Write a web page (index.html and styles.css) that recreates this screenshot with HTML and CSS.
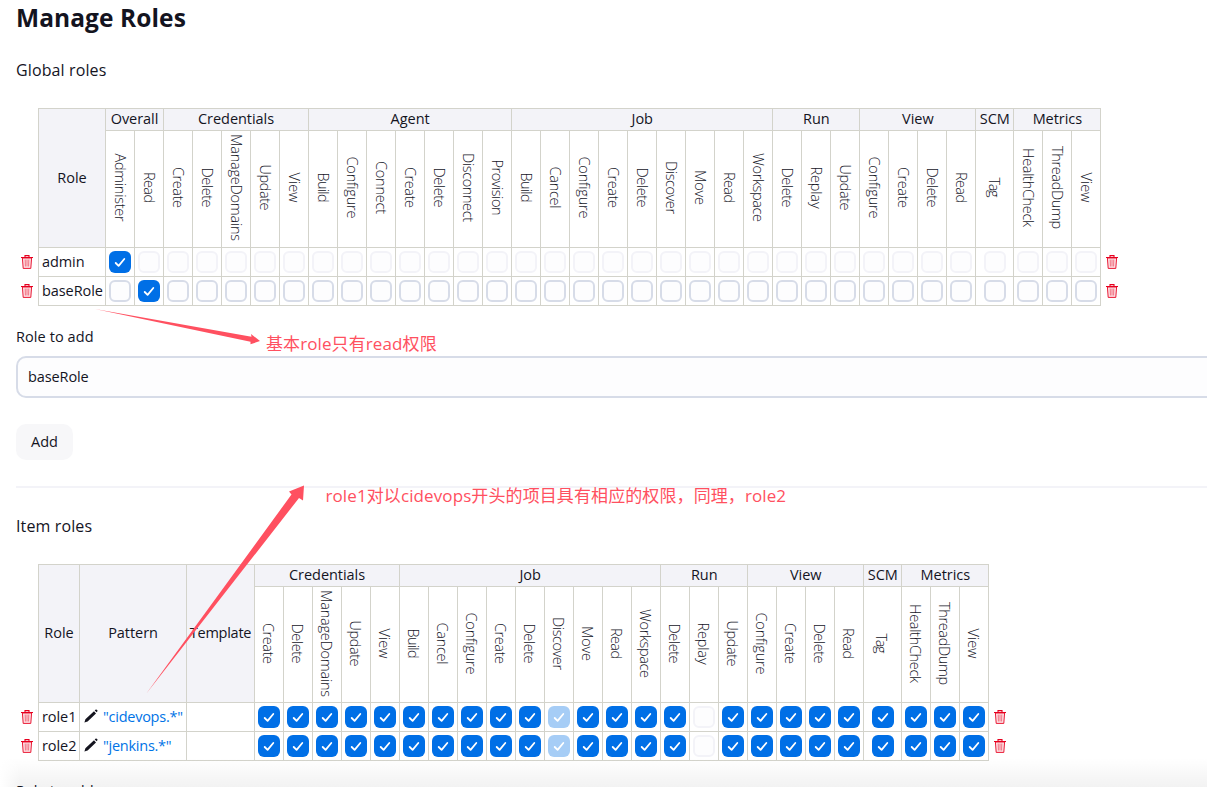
FILE: index.html
```
<!DOCTYPE html>
<html lang="en">
<head>
<meta charset="utf-8">
<title>Manage Roles</title>
<link rel="stylesheet" href="styles.css">
</head>
<body>
<svg class="sprite" aria-hidden="true">
  <symbol id="trash" viewBox="0 0 12 14">
    <path d="M0 2.500h12M4 2V.6h4V2" fill="none" stroke="#e6001f" stroke-width="1.1"/>
    <path d="M1.400 3l.8 10.400h7.600L10.600 3z" fill="#fde0e4" stroke="#e6001f" stroke-width=".9"/>
    <path d="M4.200 4.500l.2 7M6 4.500v7M7.800 4.500l-.2 7" fill="none" stroke="#ee5568" stroke-width=".8"/>
  </symbol>
  <symbol id="pencil" viewBox="0 0 14 14">
    <path d="M.4 13.500l1-3.300L10 2.200l2 2.200L3.600 12.500zM10.700 1.600l1.100-1c.7-.6 2.300 1 1.600 1.700l-.8.900z" fill="#14141f"/>
  </symbol>
</svg>
<main class="page">
  <h1 class="title">Manage Roles</h1>
  <h2 class="section-title">Global roles</h2>
  <table class="matrix" id="global-roles"></table>
  <label class="label" for="role">Role to add</label>
  <input class="input" id="role" value="baseRole">
  <button class="button" type="button">Add</button>
  <hr class="rule">
  <h2 class="section-title section-title--item">Item roles</h2>
  <table class="matrix matrix--item" id="item-roles"></table>
  <label class="label label--last">Role to add</label>
</main>
<div class="bottom-bar"></div>
<div class="page-end"></div>
<svg class="arrows" viewBox="0 0 1207 792" aria-hidden="true">
  <path d="M95 309L251.500 336.700L251 334L260 341L250.500 344.300L250.500 341.800z"/>
  <path d="M146 694L291.500 494.500L289 491.500L304 485.500L303 500.500L299 498z"/>
</svg>
<p class="note note--base">基本role只有read权限</p>
<p class="note note--item">role1对以cidevops开头的项目具有相应的权限，同理，role2</p>
<script src="matrix.js"></script>
</body>
</html>
```
FILE: styles.css
```
* { box-sizing: border-box; }
body { margin: 0; background: #fff; color: #14141f; font-family: "Open Sans", "Noto Sans", sans-serif; font-size: 14.5px; height: 792px; overflow: hidden; position: relative; }
.sprite { position: absolute; width: 0; height: 0; }
.page { padding-left: 16px; width: 1240px; }
.title { margin: 0; height: 36px; line-height: 36px; font-size: 24.5px; font-weight: 700; letter-spacing: .08px; }
.section-title { margin: 22px 0 26px; height: 24px; line-height: 24px; font-size: 16px; font-weight: 400; letter-spacing: .12px; }
.section-title--item { margin: 26px 0; }
.matrix { border-collapse: separate; border-spacing: 0; table-layout: fixed; width: 1106px; }
.matrix--item { width: 994px; }
.w-icon { width: 22px; }
.w-perm { width: 29px; }
.w-scm { width: 38px; }
.w-role { width: 67px; }
.w-item-role { width: 41px; }
.w-pattern { width: 107px; }
.w-template { width: 68px; }
.matrix th, .matrix td { padding: 0; border: 0 solid #d3d3cb; border-width: 1px 0 0 1px; font-weight: 400; white-space: nowrap; line-height: 19px; }
.matrix th { padding-bottom: 2px; background: #f3f3f8; text-align: center; letter-spacing: -.05px; }
.matrix .head-template { letter-spacing: -.25px; }
.matrix .blank, .matrix .lead { border-width: 0; background: none; }
.matrix .trail { border-width: 0 0 0 1px; background: none; }
.groups { height: 22px; }
.perms { height: 117px; }
.matrix--item .perms { height: 116px; }
.matrix .perm { padding: 0; background: #fff; vertical-align: top; }
.perm svg { display: block; width: 100%; height: 115px; }
.perm text { font-size: 14.5px; font-weight: 300; text-anchor: middle; fill: #14141f; }
.row { height: 29px; }
.row--last { height: 30px; }
.row--last td:not(.lead):not(.trail) { border-bottom-width: 1px; }
.matrix .name, .matrix .pattern { padding: 0 0 2px 3px; }
.matrix .name { letter-spacing: -.08px; }
.matrix .lead, .matrix .trail { padding: 1px 0 0 5px; }
.matrix .row--last .lead, .matrix .row--last .trail { padding-top: 0; }
.trash { display: block; width: 12px; height: 14px; }
.pattern-link { display: flex; align-items: center; gap: 5px; padding-left: 1px; color: #0073e6; letter-spacing: -.25px; }
.pencil { width: 14px; height: 14px; }
.box { display: block; width: 22px; height: 22px; margin: 0 auto; border: 2px solid #d7dce8; border-radius: 6px; background: #fdfdfe; }
.box--disabled { border-color: #f3f3f8; }
.box--checked { border: 0; background: #006fe6; }
.box--implied { border: 0; background: #a6cdf6; }
.box svg { display: block; width: 22px; height: 22px; }
.box path { fill: none; stroke: #fff; stroke-width: 1.8; stroke-linecap: round; stroke-linejoin: round; }
.label { display: block; margin-top: 20px; height: 22px; line-height: 22px; letter-spacing: .08px; }
.label--last { margin-top: 19px; }
.input { display: block; margin-top: 8px; width: 1210px; height: 42px; padding: 0 10px 1px; border: 2px solid #d7dce8; border-radius: 10px; background: #fdfdfe; color: #14141f; font: inherit; letter-spacing: -.1px; }
.button { display: block; margin-top: 26px; width: 57px; height: 36px; padding: 0 0 2px; border: 0; border-radius: 10px; background: #f7f7f9; color: #14141f; font: inherit; }
.rule { margin: 26px 0 0; height: 2px; border: 0; background: #f3f3f8; }
.bottom-bar { position: absolute; left: 0; top: 758px; width: 1207px; height: 29px; background: linear-gradient(90deg, #fff, transparent 20px), linear-gradient(rgba(0,0,0,0), rgba(0,0,0,.05)); }
.page-end { position: absolute; left: 0; top: 787px; width: 1207px; height: 5px; background: #fff; }
.arrows { position: absolute; left: 0; top: 0; width: 1207px; height: 792px; fill: #ff5060; pointer-events: none; }
.note { position: absolute; margin: 0; color: #ff5060; font-family: "Open Sans", "Noto Sans CJK SC", sans-serif; font-size: 17px; line-height: 24px; letter-spacing: .1px; white-space: nowrap; }
.note--base { left: 266px; top: 332px; }
.note--item { left: 325.5px; top: 484px; }
```
FILE: matrix.js
```
const groups = {
  Overall: ["Administer", "Read"],
  Credentials: ["Create", "Delete", "ManageDomains", "Update", "View"],
  Agent: ["Build", "Configure", "Connect", "Create", "Delete", "Disconnect", "Provision"],
  Job: ["Build", "Cancel", "Configure", "Create", "Delete", "Discover", "Move", "Read", "Workspace"],
  Run: ["Delete", "Replay", "Update"],
  View: ["Configure", "Create", "Delete", "Read"],
  SCM: ["Tag"],
  Metrics: ["HealthCheck", "ThreadDump", "View"]
};

// Length of each permission label along its vertical axis.
const lengths = {
  Administer: 68, Read: 31, Create: 41, Delete: 40, ManageDomains: 107, Update: 46, View: 30,
  Build: 30, Configure: 62, Connect: 53, Disconnect: 69, Provision: 56, Cancel: 42,
  Discover: 53, Move: 35, Workspace: 69, Replay: 42, Tag: 20, HealthCheck: 79, ThreadDump: 83
};

const trash = '<svg class="trash"><use href="#trash"/></svg>';
const pencil = '<svg class="pencil"><use href="#pencil"/></svg>';
const tick = '<svg viewBox="0 0 22 22"><path d="M6.700 12l2.900 2.900L15.300 8"/></svg>';

function box(state) {
  const mark = state === "checked" || state === "implied" ? tick : "";
  return `<td><span class="box box--${state}">${mark}</span></td>`;
}

function build(id, names, fixed, rows) {
  const perms = names.flatMap(g => groups[g].map(p => [g, p]));
  const cols = ["icon", ...fixed.map(f => f[1]), ...perms.map(([g]) => g === "SCM" ? "scm" : "perm"), "icon"];
  const isItem = id === "item-roles";
  const head = `<tr class="groups"><th class="blank" rowspan="2"></th>` +
    fixed.map(f => `<th class="head-${f[1]}" rowspan="2">${f[0]}</th>`).join("") +
    names.map(g => `<th colspan="${groups[g].length}">${g}</th>`).join("") +
    `<th class="trail" rowspan="2"></th></tr>`;
  const labels = `<tr class="perms">` + perms.map(([g, p]) => {
    const x = (g === "SCM" ? 13 : 8.5) - (isItem ? 1 : 0);
    return `<th class="perm"><svg><text transform="translate(${x} 56.5) rotate(90)" textLength="${lengths[p]}">${p}</text></svg></th>`;
  }).join("") + `</tr>`;
  const body = rows.map((r, i) => `<tr class="row${i === rows.length - 1 ? " row--last" : ""}"><td class="lead">${trash}</td>` +
    `<td class="name">${r.name}</td>` +
    (r.pattern ? `<td class="pattern"><span class="pattern-link">${pencil}${r.pattern}</span></td><td></td>` : "") +
    perms.map(([g, p]) => box(r.state(g, p))).join("") +
    `<td class="trail">${trash}</td></tr>`).join("");
  document.getElementById(id).innerHTML =
    `<colgroup>${cols.map(c => `<col class="w-${c}">`).join("")}</colgroup>` + head + labels + body;
}

build("global-roles", Object.keys(groups), [["Role", "role"]], [
  { name: "admin", state: (g, p) => p === "Administer" ? "checked" : "disabled" },
  { name: "baseRole", state: (g, p) => g === "Overall" && p === "Read" ? "checked" : "open" }
]);

const itemState = (g, p) => p === "Discover" ? "implied" : p === "Replay" ? "disabled" : "checked";
build("item-roles", ["Credentials", "Job", "Run", "View", "SCM", "Metrics"],
  [["Role", "item-role"], ["Pattern", "pattern"], ["Template", "template"]], [
  { name: "role1", pattern: '"cidevops.*"', state: itemState },
  { name: "role2", pattern: '"jenkins.*"', state: itemState }
]);
```
